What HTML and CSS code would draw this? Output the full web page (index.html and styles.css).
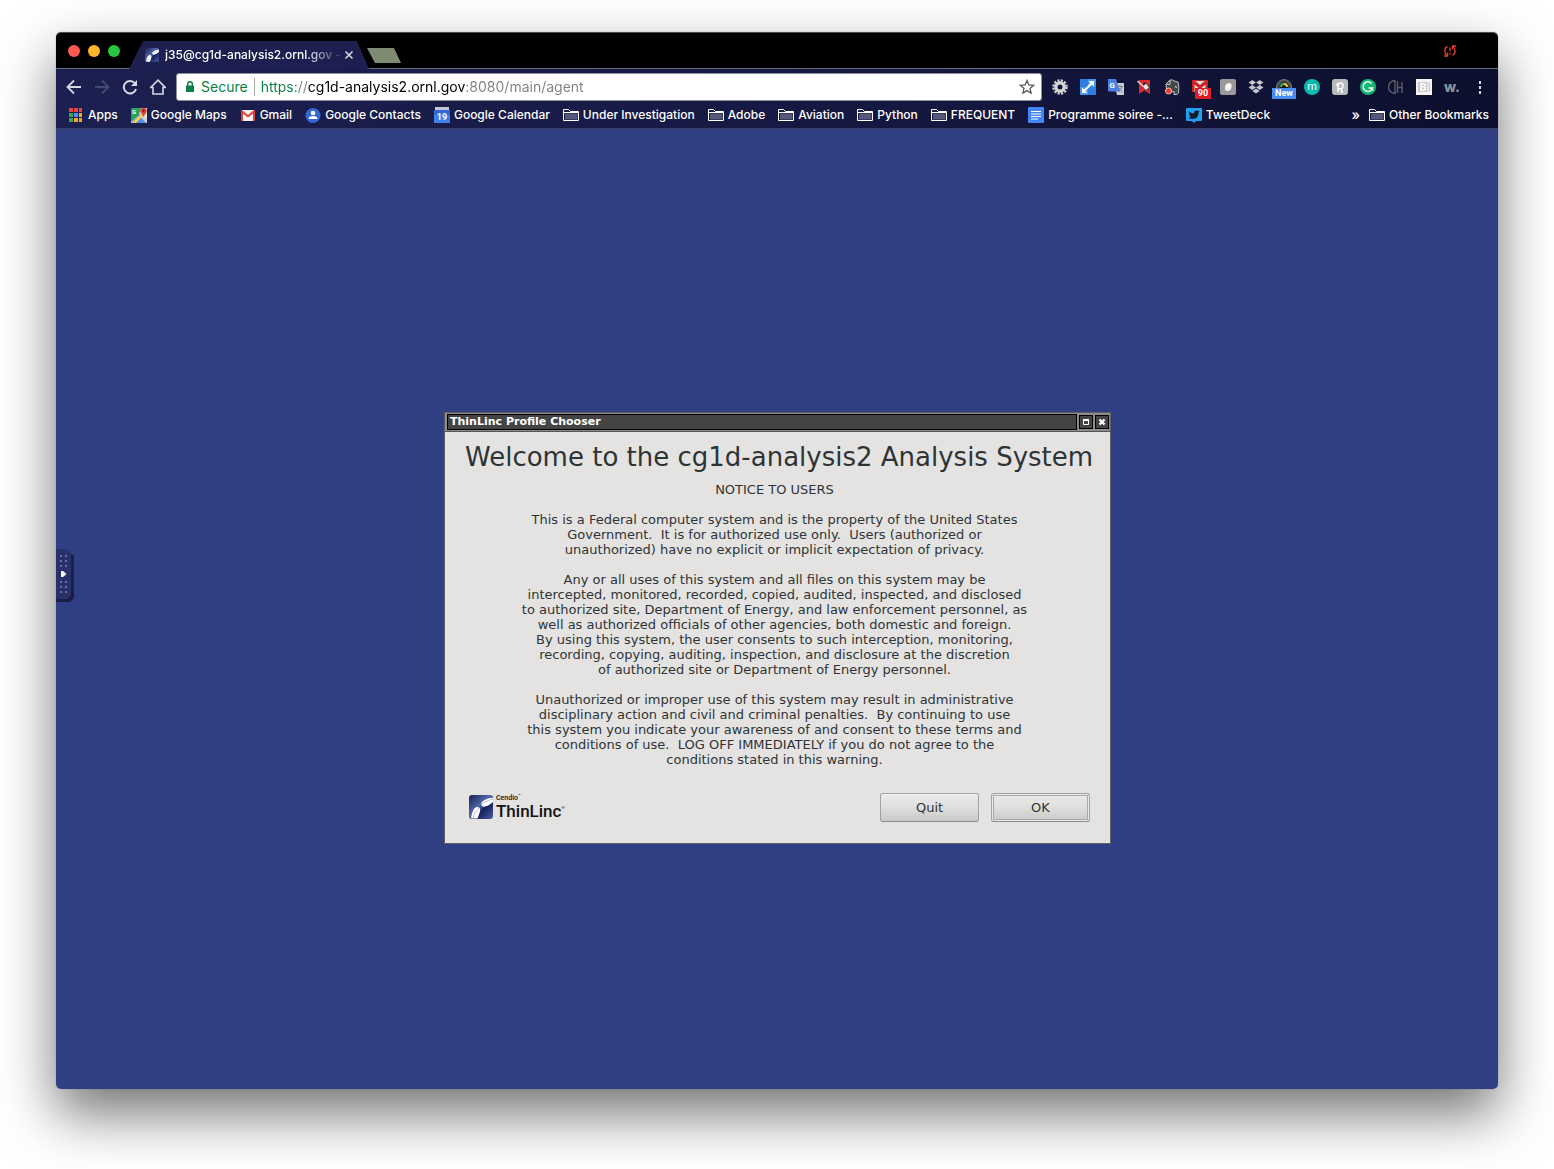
FILE: index.html
```html
<!DOCTYPE html>
<html lang="en">
<head>
<meta charset="utf-8">
<title>j35@cg1d-analysis2.ornl.gov - ThinLinc</title>
<link rel="stylesheet" href="styles.css">
</head>
<body>
<svg class="defs" width="0" height="0" aria-hidden="true">
  <linearGradient id="blue" x1="0" y1="0" x2="1" y2="1"><stop offset="0" stop-color="#16204f"/><stop offset=".45" stop-color="#5368ad"/><stop offset=".6" stop-color="#17205a"/><stop offset="1" stop-color="#4a5da8"/></linearGradient>
  <symbol id="folder" viewBox="0 0 16 16"><path d="M.5 13.500V2.500h5l2 2h8v9z" fill="#191c45" stroke="#fff"/><path d="M2 6.500h12.500V12.500H2z" fill="#555878"/><path d="M1 5.500h14" stroke="#fff"/></symbol>
  <symbol id="thinlinc" viewBox="0 0 24 24"><rect width="24" height="24" rx="3" fill="url(#blue)"/><path d="M12.500 10C11.500 6 17 4 23 2.500Q24 2.500 24 4V7Q18 12.500 13.500 11.500zM2 23C3 17 5 11 9 12Q12.500 13 10.500 18L8.500 23.500H3z" fill="#fff"/><path d="M12 10Q14 7 24 4M4 23Q5 17 10 13" stroke="#b8c0dc" fill="none"/></symbol>
</svg>
<div class="window">
  <header class="tabstrip">
    <div class="lights"><button class="light red" aria-label="Close"></button><button class="light amber" aria-label="Minimize"></button><button class="light green" aria-label="Zoom"></button></div>
    <div class="tab">
      <svg width="14" height="14"><use href="#thinlinc"/></svg>
      <span class="tab-title">j35@cg1d-analysis2.ornl.gov -</span>
      <button class="tab-close" aria-label="Close tab"><svg width="10" height="10" viewBox="0 0 10 10"><path d="M1.500 1.500l7 7M8.500 1.500l-7 7" stroke="#d4d5df" stroke-width="1.600"/></svg></button>
    </div>
    <button class="newtab" aria-label="New tab"></button>
    <svg class="sync" width="14" height="14" viewBox="0 0 14 14" fill="none" stroke="#d8402f" stroke-width="1.400"><path d="M4.500 2.500C1 4 1 9 4 11.500M9.500 11.500c3.500-2 3.500-6.500.5-9M7 3.500v4M7 9v1.500"/><path d="M1 12h3.500V8.500M13 2H9.500V5.500"/></svg>
  </header>
  <div class="chrome">
    <nav class="toolbar" aria-label="Browser toolbar">
      <button class="slot" aria-label="Back"><svg width="16" height="16" viewBox="0 0 16 16"><path d="M15 8H2M8 1.500L1.500 8 8 14.500" fill="none" stroke="#d6d7e2" stroke-width="1.800"/></svg></button>
      <button class="slot" aria-label="Forward"><svg width="16" height="16" viewBox="0 0 16 16"><path d="M1 8h13M8 1.500L14.500 8 8 14.500" fill="none" stroke="#454971" stroke-width="1.800"/></svg></button>
      <button class="slot" aria-label="Reload"><svg width="16" height="16" viewBox="0 0 16 16"><path d="M13 4.500A6.200 6.200 0 1 0 14 10" fill="none" stroke="#d6d7e2" stroke-width="2"/><path d="M15 1v6H9z" fill="#d6d7e2"/></svg></button>
      <button class="slot" aria-label="Home"><svg width="16" height="16" viewBox="0 0 16 16"><path d="M.7 8.500L8 1.200l7.300 7.300H13V15H3V8.500z" fill="none" stroke="#d6d7e2" stroke-width="1.600"/></svg></button>
      <div class="omnibox">
        <svg width="10" height="12" viewBox="0 0 10 12"><path d="M1 4.500h8V11H1z" fill="#0b7f43"/><path d="M2.700 5V3a2.300 2.300 0 0 1 4.600 0v2" fill="none" stroke="#0b7f43" stroke-width="1.400"/></svg>
        <span class="secure">Secure</span>
        <input class="url" aria-label="Address" value="https://cg1d-analysis2.ornl.gov:8080/main/agent">
        <button class="star" aria-label="Bookmark this page"><svg width="16" height="16" viewBox="0 0 16 16"><path d="M8 1.500l1.900 4.400 4.700.4-3.600 3.100 1.100 4.700L8 11.600l-4.100 2.500L5 9.400 1.400 6.300l4.700-.4z" fill="none" stroke="#5a5a5a" stroke-width="1.300"/></svg></button>
      </div>
      <button class="slot" aria-label="Settings extension"><svg width="16" height="16" viewBox="0 0 16 16"><circle cx="8" cy="8" r="6.500" fill="none" stroke="#c9c9c9" stroke-width="2.600" stroke-dasharray="2.200 1.200"/><circle cx="8" cy="8" r="4.100" fill="none" stroke="#d8d8d8" stroke-width="3.200"/></svg></button>
      <button class="slot" aria-label="Resize"><svg width="16" height="16" viewBox="0 0 16 16"><path d="M0 0h16v16H0z" fill="#4596f0"/><path d="M0 0h8v8H0zM8 8h8v8H8z" fill="#2e7fe0"/><path d="M4 12l8-8" stroke="#fff" stroke-width="2"/><path d="M8.500 2H14v5.500zM2 8.500V14h5.500z" fill="#fff"/></svg></button>
      <button class="slot" aria-label="Translate"><svg width="16" height="16" viewBox="0 0 16 16"><path d="M6 4h10v12H9z" fill="#c8ccd4"/><path d="M0 0h8l4 12.500H1Q0 12.500 0 11.500z" fill="#4c7fe0"/><text x="1.500" y="9" class="glyph g8" fill="#fff">G</text><path d="M9.500 7.500h5.500M12 6v1.500M14 7.500q-1 3.500-3.500 5M11 9q1.500 3 3.500 4" stroke="#6f7d92" fill="none"/></svg></button>
      <button class="slot" aria-label="Bookmark extension"><svg width="16" height="16" viewBox="0 0 16 16"><path d="M3 1h11v14l-5.500-3.500L3 15z" fill="#d92b2b"/><path d="M6 6l3-3 5 5-2 3H9z" fill="#222"/><path d="M1.500 2l6 5.500" stroke="#f3d5d2" stroke-width="1.600"/><path d="M7 7.500l3-3 3 4-2 2H9z" fill="#e8e4e4"/></svg></button>
      <button class="slot" aria-label="Evernote"><svg width="16" height="16" viewBox="0 0 16 16"><path d="M2 5l4-4q3-.5 4 1l4 1q1.500 5 .5 11-1 2-4.500 1.500v-3q-2 1-4-.5Q2 12 2 5z" fill="#424847" stroke="#c3c7c6"/><path d="M2.500 5.500H6V2" stroke="#c3c7c6" fill="none"/><path d="M11 8q1-1 2 .5" stroke="#fff" fill="none"/><circle cx="4.500" cy="12" r="3" fill="#f0342d" stroke="#f4c0bd"/></svg></button>
      <button class="slot" aria-label="Mail checker, 90 unread"><svg width="16" height="16" viewBox="0 0 16 16"><path d="M0 1h16v12H0z" fill="#ddd"/><path d="M0 13V1l8 7 8-7v12h-2.500V5.500L8 10 2.500 5.500V13z" fill="#cf2020"/><path d="M0 1h16v1.500L8 8.500 0 2.500z" fill="#cf2020"/><path d="M3 2h10L8 6z" fill="#ddd"/></svg><span class="badge count">90</span></button>
      <button class="slot" aria-label="Moon extension"><svg width="16" height="16" viewBox="0 0 16 16"><rect width="16" height="16" rx="2" fill="#999"/><path d="M9 4q3 0 2.500 4T7 12Q4.500 11.500 5 8t4-4z" fill="#f5f5f5"/></svg></button>
      <button class="slot" aria-label="Dropbox"><svg width="16" height="16" viewBox="0 0 16 16" fill="#c4c6cd"><path d="M4.300 1L8 3.500 4.300 6 .5 3.500zM11.700 1l3.800 2.500L11.700 6 8 3.500zM4.300 6L8 8.500 4.300 11 .5 8.500zM11.700 6l3.800 2.500L11.700 11 8 8.500zM4.300 12L8 9.600l3.700 2.400L8 14.500z"/></svg></button>
      <button class="slot" aria-label="Camera extension, new"><svg width="16" height="16" viewBox="0 0 16 16"><circle cx="8" cy="8" r="7.500" fill="#494d50" stroke="#73777a"/><circle cx="8" cy="8" r="4.500" fill="#111"/><path d="M5 8a3 3 0 0 1 3-3" stroke="#33b36b" stroke-width="2" fill="none"/><path d="M8 5a3 3 0 0 1 3 3" stroke="#f2cc33" stroke-width="2" fill="none"/></svg><span class="badge new">New</span></button>
      <button class="slot" aria-label="M extension"><svg width="16" height="16" viewBox="0 0 16 16"><circle cx="8" cy="8" r="8" fill="#06b8ae"/><text x="8" y="11" text-anchor="middle" class="glyph g10 light-glyph" fill="#fff">m</text></svg></button>
      <button class="slot" aria-label="Honey"><svg width="16" height="16" viewBox="0 0 16 16"><rect width="16" height="16" rx="3" fill="#b7b9bb"/><path d="M6 13V4M6 9.500q5 1 5-2.500 0-3-2.500-3Q6.500 4 4 6M9.500 9.500V13H11" stroke="#fff" stroke-width="1.500" fill="none"/></svg></button>
      <button class="slot" aria-label="Grammarly"><svg width="16" height="16" viewBox="0 0 16 16"><circle cx="8" cy="8" r="8" fill="#15b573"/><path d="M11.500 4.500A4.800 4.800 0 1 0 12.500 9H8.500" stroke="#e9fff5" stroke-width="1.500" fill="none"/><path d="M10 9.500l2.500-.5.500 3" stroke="#e9fff5" fill="none"/></svg></button>
      <button class="slot" aria-label="CH extension"><svg width="16" height="16" viewBox="0 0 16 16"><path d="M7 1.500a6.500 6.500 0 0 0 0 13zM9.500 2v12M14 3v11M9.500 8.500H14" stroke="#5c5d68" stroke-width="1.400" fill="none"/></svg></button>
      <button class="slot" aria-label="B extension"><svg width="16" height="16" viewBox="0 0 16 16"><path d="M0 0h16v16H0z" fill="#f4f4f4"/><path d="M2 3h12v10H2z" fill="#c9c9c9"/><text x="7" y="12" text-anchor="middle" class="glyph g10" fill="#fff">B</text><path d="M12 3v10" stroke="#fff"/></svg></button>
      <button class="slot wave" aria-label="W extension">w.</button>
      <button class="slot" aria-label="Menu"><svg width="16" height="16" viewBox="0 0 16 16" fill="#d6d7e2"><path d="M7 2h2v3H7zM7 7h2v3H7zM7 12h2v3H7z"/></svg></button>
    </nav>
    <nav class="bookmarks" aria-label="Bookmarks">
      <a href="#"><svg width="16" height="16" viewBox="0 0 16 16"><path d="M1 1h4v4H1zM6 1h4v4H6zM11 1h3v4h-3z" fill="#e8453c"/><path d="M1 6h4v4H1zM1 11h4v4H1z" fill="#3aa757"/><path d="M6 6h4v4H6z" fill="#4d8df6"/><path d="M11 6h3v4h-3zM6 11h4v4H6zM11 11h3v4h-3z" fill="#f6a81c"/></svg>Apps</a>
      <a href="#"><svg width="16" height="16" viewBox="0 0 16 16"><path d="M0 1h16v15H0z" fill="#e9e5dc"/><path d="M0 1h10L8 8l-8 7z" fill="#2ca05a"/><path d="M0 16l9-9 7 9z" fill="#538cf0"/><path d="M1 16L10 7l2 2-7 7z" fill="#f8cf45"/><path d="M9 9l6 7h1v-5z" fill="#d0d0d0"/><path d="M12.500 10L9.500 5a3.200 3.200 0 1 1 6 0z" fill="#db4437"/><circle cx="12.500" cy="3.800" r="1.200" fill="#7b231c"/><text x="1" y="7" class="glyph g6" fill="#fff">G</text></svg>Google Maps</a>
      <a href="#"><svg width="16" height="16" viewBox="0 0 16 16"><path d="M1 3h14v11H1z" fill="#f2f2f2"/><path d="M1 14V3h1l6 5 6-5h1v11h-2V6.500L8 10.500 3 6.500V14z" fill="#db4437"/></svg>Gmail</a>
      <a href="#"><svg width="16" height="16" viewBox="0 0 16 16"><circle cx="8" cy="8.500" r="7.500" fill="#3367d6"/><circle cx="8" cy="6" r="2.300" fill="#fff"/><path d="M3.500 12q0-3 4.500-3t4.500 3z" fill="#fff"/></svg>Google Contacts</a>
      <a href="#"><svg width="16" height="16" viewBox="0 0 16 16"><path d="M1 0h14v5H1z" fill="#c5c9d2"/><path d="M0 3h16v13H0z" fill="#3f7fee"/><path d="M0 3h16v5H0z" fill="#3367d6"/><text x="8" y="13" text-anchor="middle" class="glyph g9" fill="#fff">19</text></svg>Google Calendar</a>
      <a href="#"><svg width="16" height="16"><use href="#folder"/></svg>Under Investigation</a>
      <a href="#"><svg width="16" height="16"><use href="#folder"/></svg>Adobe</a>
      <a href="#"><svg width="16" height="16"><use href="#folder"/></svg>Aviation</a>
      <a href="#"><svg width="16" height="16"><use href="#folder"/></svg>Python</a>
      <a href="#"><svg width="16" height="16"><use href="#folder"/></svg>FREQUENT</a>
      <a href="#"><svg width="16" height="16" viewBox="0 0 16 16"><rect width="16" height="16" rx="1" fill="#4285f4"/><path d="M3 4.500h10M3 7h10M3 9.500h10M3 12h7" stroke="#fff"/></svg>Programme soiree -...</a>
      <a href="#"><svg width="16" height="16" viewBox="0 0 16 16"><path d="M1 1h14q1 0 1 1v11q0 1-1 1h-5l-2 2-2-2H1q-1 0-1-1V2q0-1 1-1z" fill="#1da1f2"/><path d="M3 4q2 2.500 5 2.500Q8 3.500 10.500 3.500L12 4l1.500-.3L12.500 6q0 5.500-5.500 6Q4 12 2.500 10.800L5 10 3.500 8.500 3 6z" fill="#0d1b2c"/></svg>TweetDeck</a>
      <button class="more" aria-label="More bookmarks">»</button>
      <a href="#"><svg width="16" height="16"><use href="#folder"/></svg>Other Bookmarks</a>
    </nav>
  </div>
  <main class="desktop">
    <button class="handle" aria-label="Show control panel"><svg width="18" height="53" viewBox="0 0 18 53"><path d="M0 3h13l5 4v42l-4 4H0z" fill="#1b1f48"/><path d="M0 0h11l4 4v42l-4 4H0z" fill="#283169"/><path d="M4 7h2M9 7h2M4 12h2M9 12h2M4 17h2M9 17h2M4 33h2M9 33h2M4 38h2M9 38h2M4 43h2M9 43h2" stroke="#68709c" stroke-width="2"/><path d="M5 22h2l3.500 3L7 28H5z" fill="#fff"/></svg></button>
    <section class="dialog" aria-labelledby="dialog-title">
      <div class="titlebar">
        <span class="title" id="dialog-title">ThinLinc Profile Chooser</span>
        <button class="winbtn" aria-label="Maximize"><svg width="12" height="12" viewBox="0 0 12 12"><path d="M3.500 4h5v4.500h-5z" fill="none" stroke="#fff"/><path d="M3 4h6" stroke="#fff" stroke-width="2"/></svg></button>
        <button class="winbtn" aria-label="Close dialog"><svg width="12" height="12" viewBox="0 0 12 12"><path d="M3.500 3.500l5 5M8.500 3.500l-5 5" stroke="#fff" stroke-width="2.400"/></svg></button>
      </div>
      <div class="content">
        <h1>Welcome to the cg1d-analysis2 Analysis System</h1>
        <p class="notice">NOTICE TO USERS

This is a Federal computer system and is the property of the United States
Government.  It is for authorized use only.  Users (authorized or
unauthorized) have no explicit or implicit expectation of privacy.

Any or all uses of this system and all files on this system may be
intercepted, monitored, recorded, copied, audited, inspected, and disclosed
to authorized site, Department of Energy, and law enforcement personnel, as
well as authorized officials of other agencies, both domestic and foreign.
By using this system, the user consents to such interception, monitoring,
recording, copying, auditing, inspection, and disclosure at the discretion
of authorized site or Department of Energy personnel.

Unauthorized or improper use of this system may result in administrative
disciplinary action and civil and criminal penalties.  By continuing to use
this system you indicate your awareness of and consent to these terms and
conditions of use.  LOG OFF IMMEDIATELY if you do not agree to the
conditions stated in this warning.</p>
        <div class="actions">
          <div class="brand"><svg width="24" height="24"><use href="#thinlinc"/></svg><div class="wordmark"><span class="maker">Cendio<sup>™</sup></span><span class="product">ThinLinc<sup>®</sup></span></div></div>
          <button class="btn">Quit</button>
          <button class="btn primary">OK</button>
        </div>
      </div>
    </section>
  </main>
</div>
</body>
</html>
```
FILE: styles.css
```css
* { box-sizing: border-box; }
html, body { min-height: 100vh; }
body {
  margin: 0;
  padding: 32px 56px 80px;
  display: flex;
  background: #fff;
  font: 500 12px/16px Inter, "Liberation Sans", sans-serif;
  overflow: hidden;
}
button { margin: 0; padding: 0; border: 0; background: none; font: inherit; color: inherit; }
svg { display: block; flex: none; }
.defs { position: absolute; }
.glyph { font-family: Roboto, sans-serif; font-weight: 700; }
.light-glyph { font-weight: 400; }
.g6 { font-size: 6px; }
.g8 { font-size: 8px; }
.g9 { font-size: 9px; }
.g10 { font-size: 11px; }

.window {
  flex: 1;
  min-width: 0;
  display: flex;
  flex-direction: column;
  border-radius: 5px;
  box-shadow: 0 0 1px rgba(0, 0, 0, .5), 0 25px 55px rgba(0, 0, 0, .55);
}

/* Tab strip */
.tabstrip {
  display: flex;
  height: 37px;
  background: #000;
  border-top: 1px solid #4d4d4d;
  border-bottom: 1px solid #666a80;
  border-radius: 5px 5px 0 0;
}
.lights { display: flex; gap: 8px; padding: 12px 0 0 12px; width: 73px; }
.light { width: 12px; height: 12px; border-radius: 50%; }
.red { background: #ff5a52; }
.amber { background: #fdb52b; }
.green { background: #29c73f; }
.tab {
  display: flex;
  align-items: center;
  width: 240px;
  height: 28px;
  margin-top: 8px;
  padding: 0 15px 0 16px;
  background: #1c1f4f;
  clip-path: polygon(14px 0, 228px 0, 240px 100%, 0 100%);
  color: #fff;
}
.tab-title {
  flex: 1;
  white-space: nowrap;
  margin: 0 0 0 6px;
  -webkit-mask-image: linear-gradient(90deg, #000 78%, transparent);
  mask-image: linear-gradient(90deg, #000 78%, transparent);
}
.newtab {
  width: 34px;
  height: 15px;
  margin: 15px 0 0 -2px;
  background: #7f8a73;
  clip-path: polygon(0 0, 27px 0, 100% 100%, 8px 100%);
}
.sync { margin: 11px 41px 0 auto; }

/* Toolbar and bookmarks */
.chrome {
  height: 60px;
  padding: 4px 4px 0;
  background: linear-gradient(90deg, #1c2050, #171a45 45%, #0d0f2e);
  border-bottom: 1px solid #3a3c62;
  color: #fff;
}
.toolbar { display: flex; height: 28px; }
.slot {
  position: relative;
  display: flex;
  align-items: center;
  justify-content: center;
  flex: 0 0 28px;
}
.badge {
  position: absolute;
  font: 700 9px/11px Roboto, sans-serif;
  color: #fff;
  text-align: center;
}
.count { left: 9px; top: 15px; width: 16px; background: #db1e24; }
.new { left: 2px; top: 15px; width: 24px; background: #4a8df6; }
.wave { color: #8b929e; font-size: 14px; font-weight: 800; }
.omnibox {
  flex: 1;
  min-width: 0;
  display: flex;
  align-items: center;
  margin: 0 4px;
  padding: 0 6px 0 8px;
  background: #fff;
  border: 1px solid #8d8f9c;
  border-radius: 3px;
  font: 400 14px/18px Inter, sans-serif;
}
.secure { color: #0b7f43; margin-left: 6px; padding-right: 6px; border-right: 1px solid #aaa; }
.url {
  flex: 1;
  min-width: 0;
  margin-left: 6px;
  padding: 0;
  border: 0;
  outline: 0;
  font: inherit;
  color: transparent;
  background: linear-gradient(90deg, #0b7f43 37px, #808080 37px 47px, #000 47px 205px, #808080 205px);
  -webkit-background-clip: text;
  background-clip: text;
}
.bookmarks { display: flex; align-items: center; gap: 13px; height: 27px; padding: 0 5px 0 8px; white-space: nowrap; }
.bookmarks a { display: flex; align-items: center; gap: 4px; color: #fff; text-decoration: none; }
.more { margin-left: auto; margin-right: -4px; font-size: 14px; }

/* Remote desktop */
.desktop {
  position: relative;
  flex: 1;
  display: flex;
  align-items: center;
  justify-content: center;
  padding: 37px 0 0 1px;
  background: #303e84;
  border-radius: 0 0 5px 5px;
}
.handle { position: absolute; left: 0; top: 420px; }

/* Profile chooser */
.dialog {
  width: 667px;
  max-width: 100%;
  background: #e4e3e2;
  border: 1px solid #5e5e5e;
  font: 400 13px/15px "DejaVu Sans", sans-serif;
  color: #2e3436;
}
.titlebar { display: flex; gap: 2px; padding: 1px 1px 1px 2px; background: #8c8c8c; border-bottom: 1px solid #555; }
.title {
  flex: 1;
  height: 16px;
  padding-left: 2px;
  background: #444;
  border: 1px solid #000;
  color: #fff;
  font: 700 11px/13px "DejaVu Sans", sans-serif;
}
.winbtn { width: 14px; height: 14px; margin-top: 1px; background: #444; border: 1px solid #000; }
.content { padding: 10px 20px 21px; }
h1 { margin: 0 0 10px; font-size: 26px; line-height: 30px; font-weight: 400; text-align: center; white-space: nowrap; }
.notice { margin: 0 6px 26px 0; text-align: center; white-space: pre; }
.actions { display: flex; gap: 12px; }
.brand { flex: 1; display: flex; gap: 3px; padding: 2px 0 0 4px; color: #111; }
.wordmark { display: flex; flex-direction: column; font-family: Roboto, sans-serif; }
.maker { font-size: 7px; line-height: 7px; font-weight: 500; }
.product { font-size: 17px; line-height: 18px; font-weight: 500; }
sup { font-size: 4px; line-height: 0; vertical-align: 8px; }
.maker sup { vertical-align: 3px; }
.btn {
  width: 99px;
  height: 29px;
  border: 1px solid #a3a4a2;
  border-bottom-color: #8b8c8a;
  border-radius: 3px;
  background: linear-gradient(#ebebea, #dededd 50%, #c9cac8);
  box-shadow: inset 0 1px #f6f6f5;
}
.primary { box-shadow: inset 0 0 0 1px #e9e9e8, inset 0 0 0 2px #a9aaa8; }
```
